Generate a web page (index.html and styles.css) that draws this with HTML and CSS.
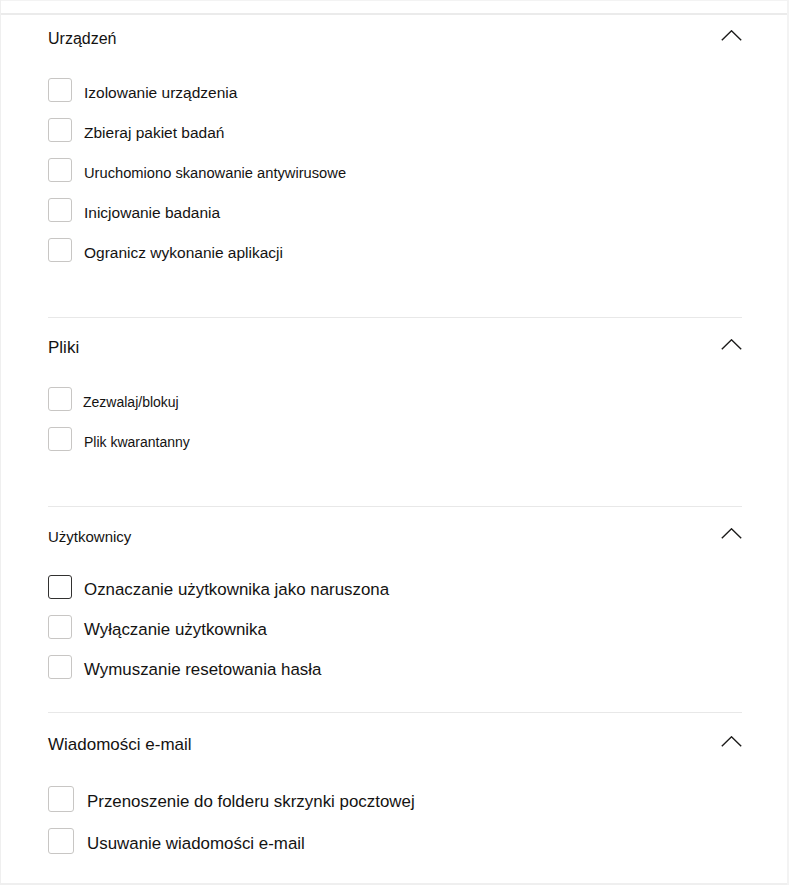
FILE: index.html
```html
<!DOCTYPE html>
<html lang="pl">
<head>
<meta charset="utf-8">
<title>Akcje</title>
<link rel="stylesheet" href="styles.css">
</head>
<body>
<div class="frame">
  <div class="topbar"></div>
  <div class="panel">
    <section class="group g1">
      <div class="group-head">
        <span class="title t1">Urządzeń</span>
        <svg class="chev" width="21" height="11" viewBox="0 0 21 11"><polyline points="0.8,10.2 10.5,0.8 20.2,10.2" fill="none" stroke="#1b1a19" stroke-width="1.4"/></svg>
      </div>
      <ul class="list">
        <li class="item"><span class="box"></span><span class="label l15">Izolowanie urządzenia</span></li>
        <li class="item"><span class="box"></span><span class="label l15">Zbieraj pakiet badań</span></li>
        <li class="item"><span class="box"></span><span class="label l14">Uruchomiono skanowanie antywirusowe</span></li>
        <li class="item"><span class="box"></span><span class="label l15">Inicjowanie badania</span></li>
        <li class="item"><span class="box"></span><span class="label l15">Ogranicz wykonanie aplikacji</span></li>
      </ul>
    </section>
    <section class="group g2">
      <div class="group-head">
        <span class="title t2">Pliki</span>
        <svg class="chev" width="21" height="11" viewBox="0 0 21 11"><polyline points="0.8,10.2 10.5,0.8 20.2,10.2" fill="none" stroke="#1b1a19" stroke-width="1.4"/></svg>
      </div>
      <ul class="list">
        <li class="item"><span class="box"></span><span class="label l13 tight">Zezwalaj/blokuj</span></li>
        <li class="item"><span class="box"></span><span class="label l13">Plik kwarantanny</span></li>
      </ul>
    </section>
    <section class="group g3">
      <div class="group-head">
        <span class="title t3">Użytkownicy</span>
        <svg class="chev" width="21" height="11" viewBox="0 0 21 11"><polyline points="0.8,10.2 10.5,0.8 20.2,10.2" fill="none" stroke="#1b1a19" stroke-width="1.4"/></svg>
      </div>
      <ul class="list">
        <li class="item"><span class="box dark"></span><span class="label l16">Oznaczanie użytkownika jako naruszona</span></li>
        <li class="item"><span class="box"></span><span class="label l16">Wyłączanie użytkownika</span></li>
        <li class="item"><span class="box"></span><span class="label l16">Wymuszanie resetowania hasła</span></li>
      </ul>
    </section>
    <section class="group g4">
      <div class="group-head">
        <span class="title t4">Wiadomości e-mail</span>
        <svg class="chev" width="21" height="11" viewBox="0 0 21 11"><polyline points="0.8,10.2 10.5,0.8 20.2,10.2" fill="none" stroke="#1b1a19" stroke-width="1.4"/></svg>
      </div>
      <ul class="list">
        <li class="item"><span class="box big"></span><span class="label l16 wide">Przenoszenie do folderu skrzynki pocztowej</span></li>
        <li class="item"><span class="box big"></span><span class="label l16 wide">Usuwanie wiadomości e-mail</span></li>
      </ul>
    </section>
  </div>
</div>
</body>
</html>
```

FILE: styles.css
```css
* { box-sizing: border-box; }

html, body {
  margin: 0;
  padding: 0;
  background: #ffffff;
}

body {
  font-family: "Liberation Sans", Arial, sans-serif;
  color: #141312;
}

.frame {
  width: 789px;
  height: 885px;
  border-left: 1px solid #efefef;
  border-right: 2px solid #f3f3f3;
}

.topbar {
  height: 15px;
  border-top: 1px solid #f3f3f3;
  border-bottom: 2px solid #ebebeb;
}

.panel {
  padding: 0 45px 0 47px;
  border-bottom: 2px solid #efefef;
}

.group + .group {
  border-top: 1px solid #e8e8e8;
}

.group-head {
  height: 30px;
  display: flex;
  align-items: center;
  justify-content: space-between;
}

.chev {
  display: block;
  margin-bottom: 6px;
}

.title {
  font-size: 16px;
  line-height: 26px;
  padding-top: 2px;
}

.t2 { font-size: 17px; }
.t3 { font-size: 15px; }
.t4 { font-size: 17px; }

.list {
  list-style: none;
  margin: 0;
  padding: 0;
  display: flex;
  flex-direction: column;
  gap: 16px;
}

.item {
  display: flex;
  align-items: center;
  gap: 12px;
}

.box {
  flex: none;
  width: 24px;
  height: 24px;
  border: 1px solid #c8c6c4;
  border-radius: 3px;
  background: #ffffff;
}

.box.dark {
  border-color: #323130;
  border-width: 1.5px;
}

.box.big {
  width: 26px;
  height: 26px;
}

.label {
  white-space: nowrap;
  line-height: 14px;
  padding-top: 6px;
}

.l13 { font-size: 14px; }
.l14 { font-size: 14.7px; }
.l15 { font-size: 15.5px; }
.l16 { font-size: 16.9px; }

.tight { margin-left: -1px; }
.wide { margin-left: 1px; }

.g1 { padding: 8px 0 55px; }
.g1 .list { margin-top: 25px; }

.g2 { padding: 14px 0 55px; }
.g2 .list { margin-top: 25px; }

.g3 { padding: 14px 0 33px; }
.g3 .list { margin-top: 24px; }

.g4 { padding: 16px 0 29px; }
.g4 .list { margin-top: 27px; }
```
